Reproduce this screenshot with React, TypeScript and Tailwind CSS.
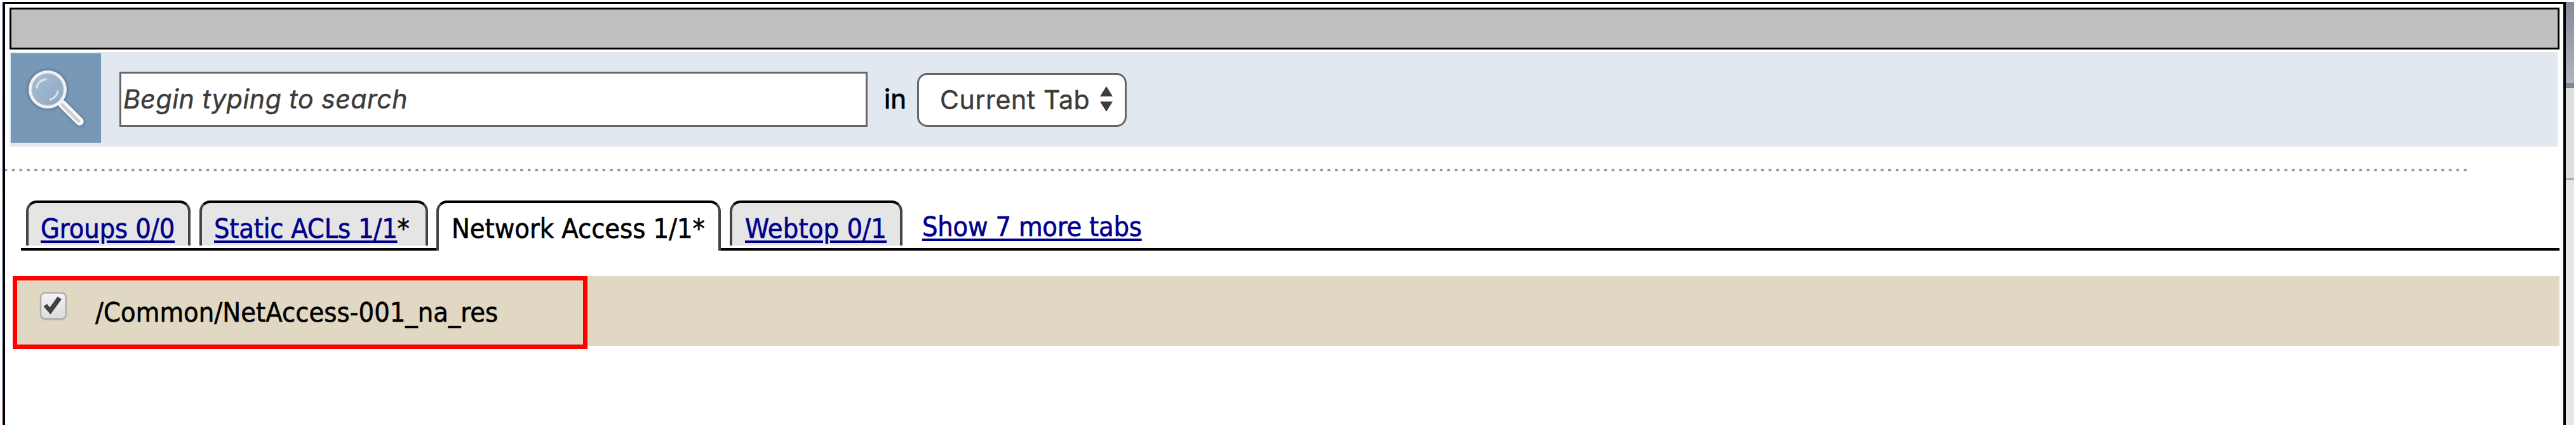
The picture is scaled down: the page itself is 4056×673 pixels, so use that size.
import React from "react";

function SearchIcon() {
  return (
    <svg className="block h-[141px] w-[142px] shrink-0 bg-[#7898b8]" viewBox="17 84 142 141">
      <defs>
        <linearGradient id="lens" x1="0" y1="0" x2="1" y2="1">
          <stop offset="0" stopColor="#a9bfd6" />
          <stop offset="1" stopColor="#8aa6c4" />
        </linearGradient>
        <filter id="glow" x="-20%" y="-20%" width="140%" height="140%">
          <feGaussianBlur stdDeviation="2" />
        </filter>
      </defs>
      <g stroke="#56708c" fill="none" filter="url(#glow)" opacity="0.8">
        <circle cx="75" cy="141" r="27.500" strokeWidth="9" />
        <path d="M96 162 L126 192" strokeWidth="15" strokeLinecap="round" />
      </g>
      <path d="M94 160 L99 165" stroke="#f1f1f1" strokeWidth="8" />
      <path d="M98 164 L125.500 191.500" stroke="#fafafa" strokeWidth="12.500" strokeLinecap="round" />
      <path d="M98 165 L124 191" stroke="#cfcfcf" strokeWidth="5" strokeLinecap="round" />
      <circle cx="75" cy="141" r="27.500" fill="url(#lens)" stroke="#f1f1f1" strokeWidth="5" />
      <circle cx="75" cy="141" r="25" fill="none" stroke="#b9c0c8" strokeWidth="1" />
      <path d="M58 138 Q60 127 72 125" fill="none" stroke="#d3e0ec" strokeWidth="3.500" strokeLinecap="round" />
      <path d="M91 144 Q89 154 79 157" fill="none" stroke="#d3e0ec" strokeWidth="3.500" strokeLinecap="round" />
    </svg>
  );
}

function SearchBar() {
  return (
    <div className="ml-[7px] mt-[4px] flex h-[149px] w-[4012px] bg-[#e1e8ef] pl-[2px] pt-[2px] font-['Inter','Liberation_Sans',sans-serif] text-[41px] leading-[50px] [-webkit-text-stroke:0.5px]">
      <SearchIcon />
      <div className="ml-[29px] mt-[29px] h-[87px] w-[1178px] whitespace-pre border-[3px] border-[#666] bg-white pl-[3px] pt-[15px] italic tracking-[0.52px] text-[#3c3c3c]">
        Begin typing to search
      </div>
      <div className="ml-[26px] mt-[47px] w-[52px] text-[42px] text-black [-webkit-text-stroke:0.8px]">in</div>
      <div className="mt-[31px] flex h-[85px] w-[330px] whitespace-pre rounded-[16px] border-[3px] border-[#666] bg-white pl-[33px] pt-[14px] tracking-[0.6px] text-[#3c3c3c]">
        <span className="w-[251px]">Current Tab</span>
        <svg className="mt-[4px] block h-[40px] w-[22px]" viewBox="0 0 22 40" fill="#3c3c3c">
          <path d="M11 0 L21 16 H1 Z" />
          <path d="M11 40 L21 24 H1 Z" />
        </svg>
      </div>
    </div>
  );
}

type TabProps = { label: string; star?: boolean; active?: boolean; width: string; pad: string; tracking: string };

function Tab({ label, star, active, width, pad, tracking }: TabProps) {
  const shape = active ? "h-[79px] bg-white" : "h-[71px] bg-[#e5e5e5]";
  return (
    <div className={`${width} h-[79px] shrink-0 ${active ? "" : "border-b-4 border-black"}`}>
      <div className={`${shape} ${pad} rounded-t-[17px] border-x-4 border-t-4 border-x-[#444] border-t-black pt-[15px] text-[43px] leading-[50px] whitespace-pre`}>
        {active ? (
          <span className={tracking}>{label}</span>
        ) : (
          <a className={`${tracking} text-[#00008b] underline decoration-[3.5px] underline-offset-[4px]`}>{label}</a>
        )}
        {star && <span>*</span>}
      </div>
    </div>
  );
}

function Tabs() {
  return (
    <div className="ml-[25px] mt-[46px] flex h-[79px] w-[3997px] [-webkit-text-stroke:0.6px]">
      <div className="w-[8px] border-b-4 border-black" />
      <Tab label="Groups 0/0" width="w-[259px]" pad="pl-[19px]" tracking="tracking-[-0.12px]" />
      <div className="w-[14px] border-b-4 border-black" />
      <Tab label="Static ACLs 1/1" star width="w-[360px]" pad="pl-[19px]" tracking="tracking-[-0.22px]" />
      <div className="w-[13px] border-b-4 border-black" />
      <Tab label="Network Access 1/1*" active width="w-[448px]" pad="pl-[20px]" tracking="tracking-[-0.06px]" />
      <div className="w-[14px] border-b-4 border-black" />
      <Tab label="Webtop 0/1" width="w-[272px]" pad="pl-[20px]" tracking="tracking-[0.1px]" />
      <div className="flex-1 border-b-4 border-black pl-[31px] pt-[16px] text-[43px] leading-[50px] whitespace-pre">
        <a className="tracking-[-0.24px] text-[#00008b] underline decoration-[3.5px] underline-offset-[4px]">Show 7 more tabs</a>
      </div>
    </div>
  );
}

function ResourceRow() {
  return (
    <div className="relative ml-[12px] mt-[40px] flex h-[110px] w-[4010px] bg-[#e0d8c3]">
      <svg className="ml-[42px] mt-[24px] block h-[48px] w-[44px]" viewBox="0 0 44 48">
        <defs>
          <linearGradient id="box" x1="0" y1="0" x2="0" y2="1">
            <stop offset="0" stopColor="#f4f4f4" />
            <stop offset="1" stopColor="#dcdcdc" />
          </linearGradient>
        </defs>
        <rect x="2" y="4" width="40" height="42" rx="7" fill="#c6bfac" />
        <rect x="2" y="2.500" width="40" height="41" rx="7" fill="url(#box)" stroke="#adadad" strokeWidth="2.500" />
        <path d="M6.500 24 L12 20 L16.500 25.500 L28.500 8.500 L35 12.500 L17.500 36.500 Z" fill="#414141" />
      </svg>
      <span className="ml-[44px] mt-[32px] whitespace-pre text-[43px] leading-[50px] text-black [-webkit-text-stroke:0.6px]">
        /Common/NetAccess-001_na_res
      </span>
      <div className="absolute left-0 top-0 h-[115px] w-[905px] border-[7px] border-[#ff0000]" />
    </div>
  );
}

export default function App() {
  return (
    <div className="flex h-[673px] w-[4056px] overflow-hidden bg-white pl-[3px] pt-[3px] font-['DejaVu_Sans_Condensed','DejaVu_Sans',sans-serif]">
      <div className="h-[667px] w-[2px] bg-[linear-gradient(180deg,#8a8aa8,#7c7ca0_30%,#a08a9c_45%,#7c86b0_60%,#8890b4_80%,#a08090)]" />
      <div className="flex h-[667px] w-[4035px] flex-col border-l-[3px] border-r-[4px] border-t-[3px] border-black bg-white">
        <div className="ml-[7px] mt-[6px] h-[66px] w-[4015px] shrink-0 border-[3px] border-black bg-[#c0c0c0] shadow-[inset_0_0_0_1px_#d0d0d0]" />
        <SearchBar />
        <div className="mt-[35px] h-[4px] w-[3877px] shrink-0 bg-[repeating-linear-gradient(90deg,#999_0px,#999_3px,transparent_4px,transparent_10.27px,#999_11.27px,#999_11.77px)]" />
        <Tabs />
        <ResourceRow />
      </div>
      <div className="flex h-[667px] w-[13px] flex-col">
        <div className="h-[128px] bg-[linear-gradient(180deg,#848c98,#b0b5bd)]" />
        <div className="h-[8px] bg-[#7c8796]" />
        <div className="h-[142px] bg-[#dedede]" />
        <div className="h-[3px] bg-[#a8a8a8]" />
        <div className="flex-1 bg-[#e6e6e6]" />
      </div>
    </div>
  );
}
